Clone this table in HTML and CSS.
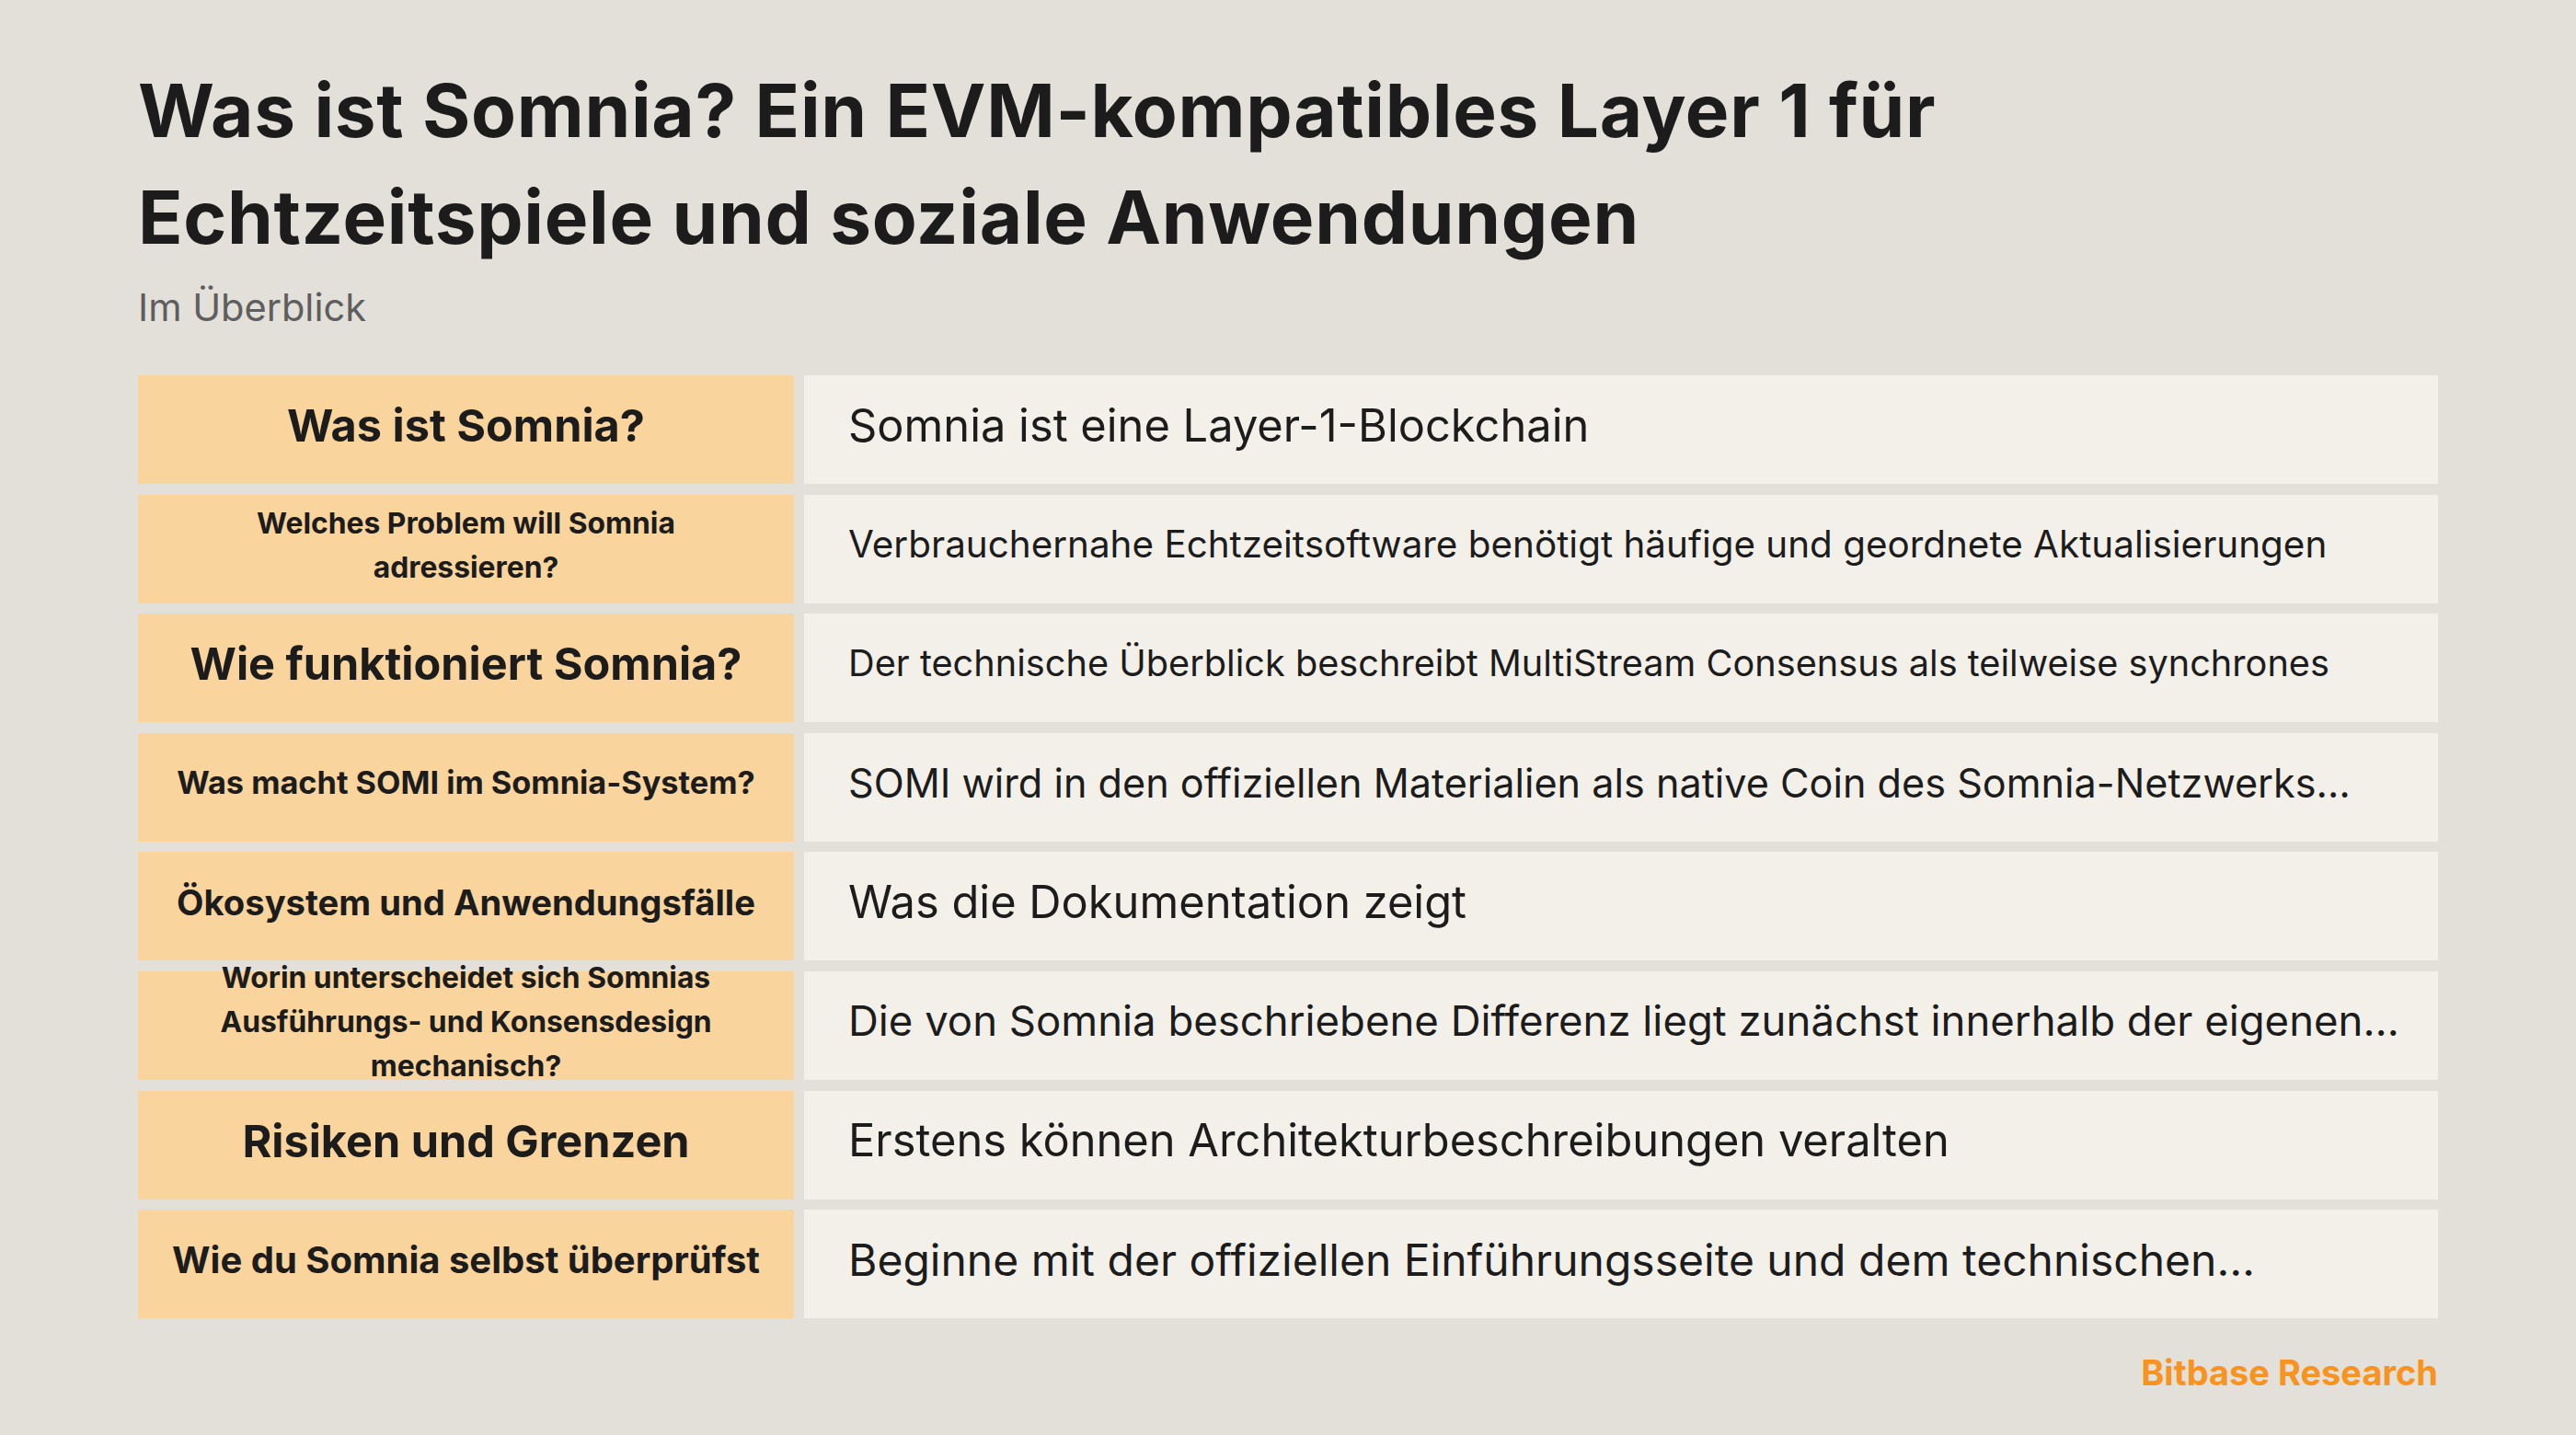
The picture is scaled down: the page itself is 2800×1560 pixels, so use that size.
FILE: index.html
```html
<!DOCTYPE html>
<html lang="de">
<head>
<meta charset="utf-8">
<title>Was ist Somnia?</title>
<link rel="stylesheet" href="styles.css">
</head>
<body>
<main class="page">
  <header class="intro">
    <h1 class="title">Was ist Somnia? Ein EVM-kompatibles Layer 1 für<br>Echtzeitspiele und soziale Anwendungen</h1>
    <p class="subtitle">Im Überblick</p>
  </header>

  <section class="grid">
    <div class="q q-xl">Was ist Somnia?</div>
    <div class="a a-xl">Somnia ist eine Layer-1-Blockchain</div>

    <div class="q q-sm">Welches Problem will Somnia<br>adressieren?</div>
    <div class="a a-r2">Verbrauchernahe Echtzeitsoftware benötigt häufige und geordnete Aktualisierungen</div>

    <div class="q q-xl">Wie funktioniert Somnia?</div>
    <div class="a a-r3">Der technische Überblick beschreibt MultiStream Consensus als teilweise synchrones</div>

    <div class="q q-r4">Was macht SOMI im Somnia-System?</div>
    <div class="a a-r4">SOMI wird in den offiziellen Materialien als native Coin des Somnia-Netzwerks…</div>

    <div class="q q-r5">Ökosystem und Anwendungsfälle</div>
    <div class="a a-xl">Was die Dokumentation zeigt</div>

    <div class="q q-sm">Worin unterscheidet sich Somnias<br>Ausführungs- und Konsensdesign<br>mechanisch?</div>
    <div class="a a-r6">Die von Somnia beschriebene Differenz liegt zunächst innerhalb der eigenen…</div>

    <div class="q q-xl">Risiken und Grenzen</div>
    <div class="a a-xl">Erstens können Architekturbeschreibungen veralten</div>

    <div class="q q-r8">Wie du Somnia selbst überprüfst</div>
    <div class="a a-r8">Beginne mit der offiziellen Einführungsseite und dem technischen…</div>
  </section>

  <footer class="brand">Bitbase Research</footer>
</main>
</body>
</html>
```

FILE: styles.css
```css
* {
  box-sizing: border-box;
}

html, body {
  margin: 0;
  padding: 0;
}

body {
  background: #e3dfd9;
  color: #1c1c1c;
  font-family: Inter, "Noto Sans", "Liberation Sans", sans-serif;
  width: 2800px;
  height: 1560px;
  overflow: hidden;
}

.page {
  padding: 62px 150px 0 150px;
  display: flex;
  flex-direction: column;
}

.title {
  margin: 0;
  font-size: 80px;
  line-height: 116px;
  font-weight: 700;
  letter-spacing: 0.7px;
  color: #1c1c1c;
}

.subtitle {
  margin: 12px 0 0 0;
  font-size: 41.5px;
  line-height: 56px;
  font-weight: 400;
  color: #5e5e5e;
}

.grid {
  margin-top: 46px;
  display: grid;
  grid-template-columns: 713px 1fr;
  grid-auto-rows: 118px;
  column-gap: 11px;
  row-gap: 11.6px;
}

.q {
  background: #f9d49d;
  display: flex;
  align-items: center;
  justify-content: center;
  text-align: center;
  padding: 0 24px 8px 24px;
  font-weight: 700;
  line-height: 1.6;
  color: #1c1c1c;
}

.a {
  background: #f3f0ea;
  display: flex;
  align-items: center;
  padding: 0 48px 10px 48px;
  white-space: nowrap;
  overflow: hidden;
  font-weight: 400;
  color: #1c1c1c;
}

.q-xl { font-size: 48.6px; }
.q-sm { font-size: 31.8px; line-height: 48px; }
.q-r4 { font-size: 34.3px; }
.q-r5 { font-size: 38.2px; }
.q-r8 { font-size: 40px; }

.a-xl { font-size: 48.8px; }
.a-r2 { font-size: 40.4px; }
.a-r3 { font-size: 39.7px; }
.a-r4 { font-size: 43.2px; }
.a-r6 { font-size: 45.5px; }
.a-r8 { font-size: 48px; }

.brand {
  margin-top: 35px;
  align-self: flex-end;
  font-size: 38px;
  line-height: 48px;
  font-weight: 700;
  color: #f7931e;
}
```
